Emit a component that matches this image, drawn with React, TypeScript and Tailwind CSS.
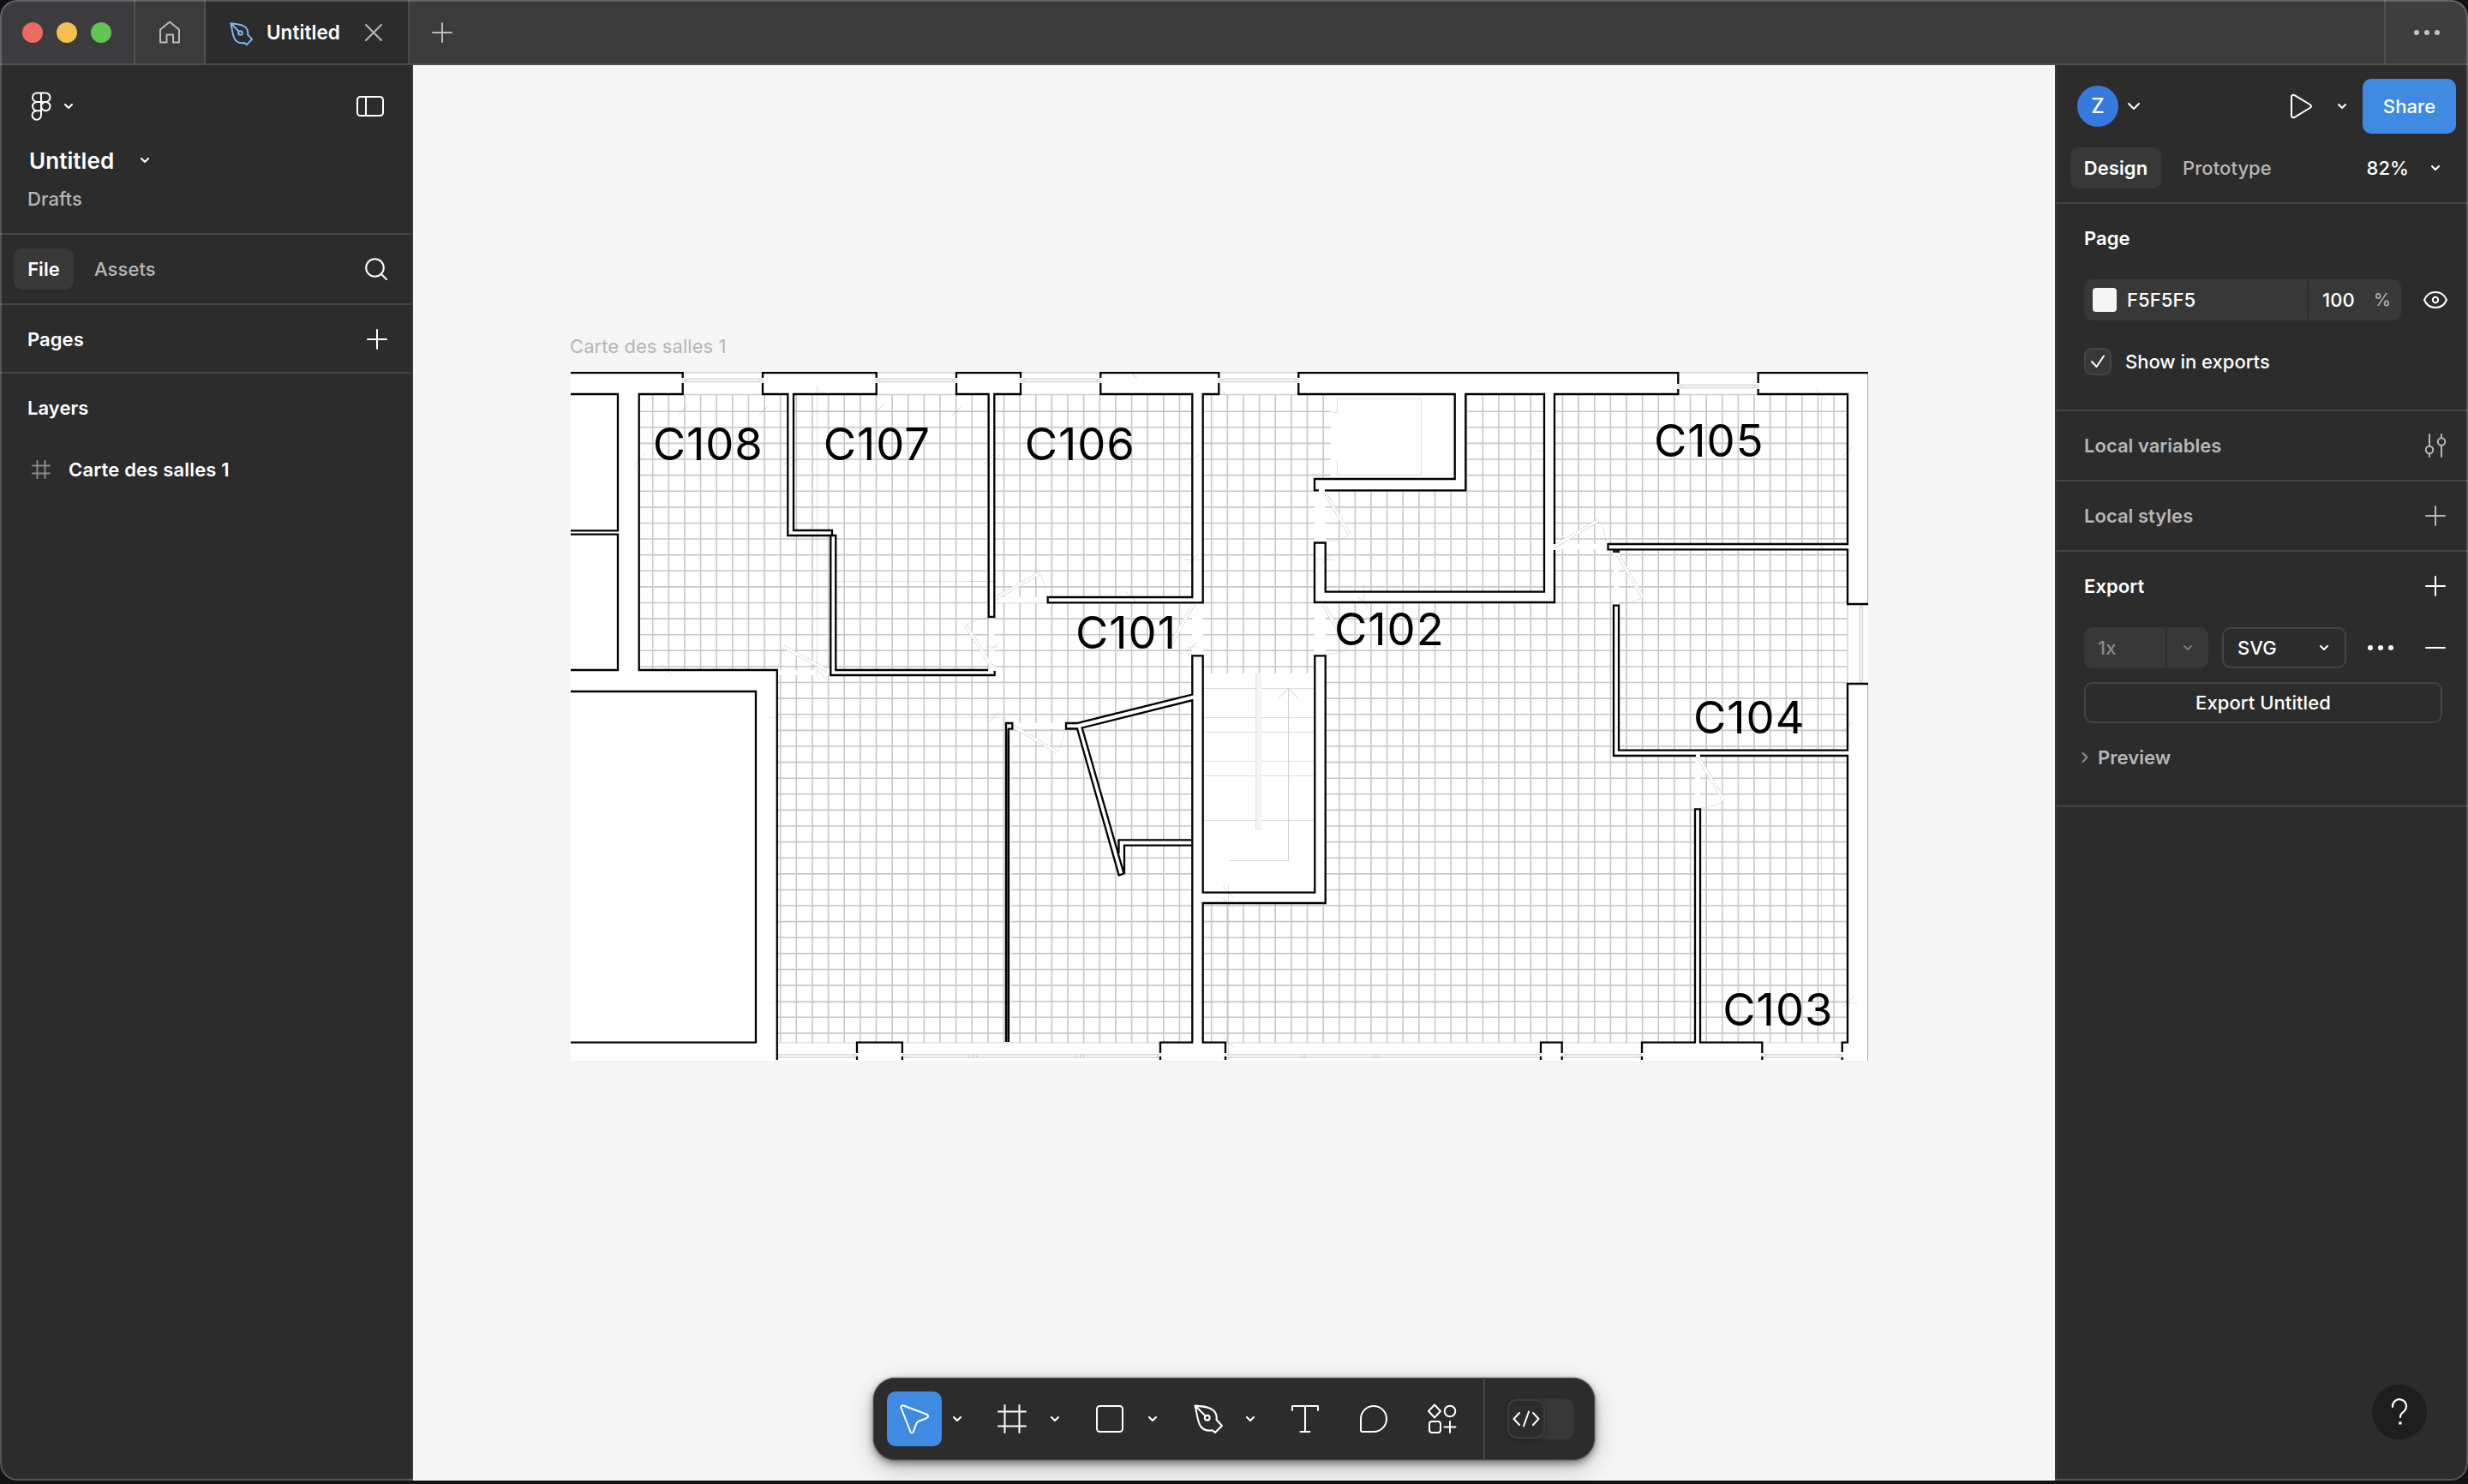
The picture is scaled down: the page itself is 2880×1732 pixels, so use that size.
import type { ReactNode } from 'react';

type IconProps = { d?: string; w?: number; h?: number; className?: string; sw?: number; children?: ReactNode };

function Icon({ d, w = 48, h = 48, className = '', sw = 2, children }: IconProps) {
  return (
    <svg
      width={w}
      height={h}
      viewBox={`0 0 ${w} ${h}`}
      fill="none"
      stroke="currentColor"
      strokeWidth={sw}
      strokeLinecap="round"
      strokeLinejoin="round"
      className={`shrink-0 ${className}`}
    >
      {d && <path d={d} />}
      {children}
    </svg>
  );
}

const Chevron = ({ className = '' }: { className?: string }) => (
  <Icon w={16} h={16} d="M4 6 L8 10 L12 6" sw={2.1} className={className} />
);

const Plus = ({ className = '' }: { className?: string }) => (
  <Icon w={24} h={24} d="M12 1V23M1 12H23" className={className} />
);

/* ---------- Floor plan ---------- */

const X0 = 745.7;
const X1 = 2156;
const Y0 = 460;
const Y1 = 1216.7;

const gridPath = (() => {
  let p = '';
  for (let i = 0; i < 75; i++) p += `M${(761.7 + i * 18.628).toFixed(2)} ${Y0}V${Y1}`;
  for (let i = 0; i < 40; i++) p += `M${X0} ${(480.2 + i * 18.608).toFixed(2)}H${X1}`;
  return p;
})();

/* White areas painted over the tile grid: x1, y1, x2, y2 */
const blanks: number[][] = [
  [666, 782, 907, 1238],
  [919, 460, 926, 625],
  [919, 619, 975, 625],
  [969, 619, 975, 788],
  [969, 782, 1160.5, 788],
  [907, 782, 969, 788],
  [1154, 460, 1160.5, 788],
  [1160, 697, 1404, 703.5],
  [1391, 460, 1404, 1217],
  [1552.7, 460, 1710, 560],
  [1534, 559, 1710, 572],
  [1698, 460, 1710, 572],
  [1802, 460, 1814, 703],
  [1534, 572, 1546.7, 1054],
  [1534, 691, 1814, 703],
  [1404, 786, 1540, 1054],
  [1814, 635, 2156, 641],
  [1883, 641, 1889, 882],
  [1883, 876, 2156, 882],
  [1978, 882, 1984, 1217],
  [1173, 844, 1180, 1217],
  [1173, 844, 1257, 850.5],
];

const walls = [
  // outer facade
  'M666 435H796.7V441M796.7 447V460H745.7V782H906.8V1237',
  'M1022.7 435H890V441M890 447V460H919.3V625H975.3V782H1153',
  'M1116 435H1191V441M1191 447V460H1160.3V720H1153.7V460H1116V447M1116 441V434',
  'M1022.7 434V441M1022.7 447V460H926V619H971V625M969.3 625V788H1160.7V783',
  'M1284.3 434V441M1284.3 447V460H1391.3V697H1222.7V703.3H1403.7V460H1422.3V447M1422.3 441V435H1284.3',
  'M1515.3 441V435H1958.3V441M1958.3 454V460H1814V635M1814 642V703H1534V633.5H1546.7V690.7H1802V460H1710.3V572.3H1546',
  'M1515.3 447V460H1697.7V559H1534V572.3H1539',
  'M2051.7 447V435H2180M2051.7 454V460H2156V635H1876.5V641.3H2156V705H2180M1958.3 441V448',
  'M2180 798H2156V875.7H1889V706.7H1883V882H1979M1984 882H2156V1216.7H2149.7V1228M2149.7 1234V1237',
  // rooms on the west side
  'M666 460H721V619.3H666M666 623.7H721V782H666',
  'M666 807H882V1216.7H666',
  // south piers
  'M1000 1237V1233M1000 1229V1216.7H1052.9V1229M1052.9 1233V1237',
  'M1354 1237V1233M1354 1229V1216.7H1391.3V817.3L1262.7 849.5L1311.5 1019.5L1305.7 1021.5L1257 850.5H1244V844H1256.7L1391.3 810.7V765.3H1403.7V1041.7H1534.3V765.3H1546.7V1054H1403.7V1216.7H1430V1229M1430 1233V1237',
  'M1798 1237V1233M1798 1229V1216.7H1822.7V1229M1822.7 1233V1237',
  'M1916 1237V1233M1916 1229V1216.7H1978V944.3H1984V1216.7H2056.3V1229M2056.3 1233V1237',
  // closet
  'M1391 980.3H1305.5V996M1391 986.7H1312V1019.5',
  'M1174 1216V844H1181.3V850.7H1177V1216',
].join('');

const topWindows = [
  [796.7, 890, 444],
  [1022.7, 1116, 444],
  [1191, 1284.3, 444],
  [1422.3, 1515.3, 444],
  [1958.3, 2051.7, 451],
];
const bottomWindows = [
  [907, 1000],
  [1053, 1354],
  [1430, 1798],
  [1823, 1916],
  [2056.3, 2149.7],
];

/* Door leaf: hinge, leaf tip, jamb where the swing arc ends */
const doors: number[][] = [
  [968, 784, 915, 755, 908, 781],
  [1158, 779, 1127, 730, 1153, 721],
  [1162, 698, 1213, 669, 1221, 697],
  [1393, 705, 1364, 756, 1392, 764],
  [1545, 573, 1575, 624, 1546, 632],
  [1544, 705, 1574, 756, 1546, 764],
  [1815, 637, 1866, 607, 1874, 636],
  [1887, 646, 1917, 697, 1889, 705],
  [1982, 884, 2012, 935, 1984, 943],
  [1183, 848, 1234, 878, 1242, 850],
];

const ticks: number[][] = [
  [891, 479], [797, 479], [1026, 477], [1116, 480], [746, 537], [920, 537], [928, 538], [1154, 536], [1161, 537],
  [1393, 536], [1392, 653], [1391, 755], [1160, 755], [1547, 654], [2156, 527], [2156, 848], [1886, 849], [1160, 837],
  [2157, 1169], [1983, 1169],
];
const backTicks: number[][] = [
  [778, 782], [960, 788], [1321, 436], [1429, 459], [1319, 696], [2125, 460], [2125, 637], [1433, 1041], [1433, 1054], [1433, 1216], [1591, 703],
];

const rooms: [string, number, number][] = [
  ['C108', 761.7, 536.7],
  ['C107', 960.7, 536.7],
  ['C106', 1195.7, 536.5],
  ['C105', 1930, 533.3],
  ['C101', 1255, 756.7],
  ['C102', 1557, 752.8],
  ['C104', 1976, 856.4],
  ['C103', 2010.3, 1196.8],
];

function FloorPlan() {
  return (
    <svg width="1514" height="804" viewBox="666 434 1514 804" fill="none" className="block">
      <rect x="666" y="435" width="1514" height="803" fill="#fff" />
      <path d={gridPath} stroke="#c8c8c8" strokeWidth="1.6" />
      {blanks.map(([a, b, c, d], i) => (
        <rect key={i} x={a} y={b} width={c - a} height={d - b} fill="#fff" />
      ))}
      <path d="M1256.7 844L1391.3 810.7V817.3L1262.7 849.5L1311.5 1019.5L1305.7 1021.5L1257 850.5ZM1305.5 980.3H1391V986.7H1312V1019L1305.5 996Z" fill="#fff" />

      {/* dimension lines */}
      <path
        d="M926 480H1153M1161 480H1391M898 837.3H1168M898 1170.5H1180M1391 1170.5H1740M1978 1170.5H2168M1382 653.5H1402M1536 653.5H1556M1384 755H1399M1150 755H1165M1130 678.5H1164M1792 526.5H1800"
        stroke="#a08a8a"
        strokeOpacity="0.22"
      />
      <path d="M953.5 450V790M976 678.5H1160M2125.5 460V1200M1433.5 1033V1237M1591.5 682V702" stroke="#888" strokeOpacity="0.25" />
      {ticks.map(([x, y], i) => (
        <path key={i} d={`M${x - 6} ${y + 6}L${x + 6} ${y - 6}`} stroke="#a08a8a" strokeOpacity="0.35" />
      ))}
      {backTicks.map(([x, y], i) => (
        <path key={i} d={`M${x - 6} ${y - 6}L${x + 6} ${y + 6}`} stroke="#a08a8a" strokeOpacity="0.35" />
      ))}

      {/* doors */}
      {doors.map(([hx, hy, tx, ty, ax, ay], i) => {
        const sweep = (tx - hx) * (ay - hy) - (ty - hy) * (ax - hx) > 0 ? 1 : 0;
        return (
          <g key={i}>
            <path d={`M${tx} ${ty}A60 60 0 0 ${sweep} ${ax} ${ay}`} stroke="#bbb" strokeWidth="0.8" strokeDasharray="1.5 1.5" />
            <path d={`M${hx} ${hy}L${tx} ${ty}`} stroke="#fff" strokeWidth="4.2" />
            <path d={`M${hx} ${hy}L${tx} ${ty}`} stroke="#b5b5b5" strokeWidth="4.4" strokeDasharray="1 1.6" />
            <path d={`M${hx} ${hy}L${tx} ${ty}`} stroke="#fff" strokeWidth="2.4" />
          </g>
        );
      })}

      {/* elevator */}
      <path d="M1555 481.5H1560.4V465.4H1658.6V554.5H1560.4V538" stroke="#ddd" />

      {/* stairs */}
      <path d="M1405 803.5H1533M1405 837.5H1533M1405 854.5H1533M1405 888.5H1533M1405 905.5H1533M1405 957.5H1533" stroke="#dedede" />
      <rect x="1465.7" y="786" width="6.5" height="181.5" fill="#f4f4f4" />
      <path d="M1465.7 786V967.5H1472" stroke="#dcdcdc" />
      <path d="M1435 1004.5H1503.5V803.5M1491 815.5L1503.5 803.5L1515.7 815.5" stroke="#cfcfcf" />

      {/* windows */}
      {topWindows.map(([a, b, y], i) => (
        <g key={i} stroke="#cfcfcf">
          <path d={`M${a} 435H${b}M${a} 460.5H${b}`} strokeWidth="1.6" />
          <rect x={a} y={y - 1.8} width={b - a} height="3.6" fill="#f6f6f6" />
          <path d={`M${a + 4} ${y - 2}V${y + 2}M${b - 4} ${y - 2}V${y + 2}`} />
        </g>
      ))}
      {bottomWindows.map(([a, b], i) => (
        <g key={i} stroke="#cfcfcf">
          <path d={`M${a} 1217H${b}`} />
          <rect x={a} y="1230.7" width={b - a} height="3.6" fill="#f6f6f6" />
          <path d={`M${a + 4} 1231V1234M${b - 4} 1231V1234`} />
        </g>
      ))}
      <path d="M1131 1231V1234M1135.5 1231V1234M1140 1231V1234M1256 1231V1234M1260.5 1231V1234M1265 1231V1234M1519 1231V1234M1523 1231V1234M1604 1231V1234M1608 1231V1234" stroke="#c4c4c4" />
      <path d="M2156 705V798" stroke="#cfcfcf" strokeWidth="1.4" />
      <rect x="2170.2" y="705" width="3.4" height="93" fill="#f6f6f6" stroke="#cfcfcf" />
      <path d="M2170 709H2174M2170 794H2174" stroke="#cfcfcf" />
      <path d="M2179.6 436V704M2179.6 799V1238" stroke="#a0a0a0" />

      <path d="M1174 851H1177V1216H1174Z" fill="#777" />
      <path d="M1882 641.5H1890V645H1882Z" fill="#222" />
      <path d={walls} stroke="#000" strokeWidth="2.3" strokeLinejoin="miter" />

      {rooms.map(([name, x, y]) => (
        <text key={name} x={x} y={y} fill="#000" className="font-['Inter',sans-serif] text-[52.5px] font-normal tracking-[0.95px]">
          {name}
        </text>
      ))}
    </svg>
  );
}

/* ---------- Chrome ---------- */

const penPath =
  'M1.5 1.5C9 2.5 17 2 22 7C25 10 25.5 13.5 25 17L31 23.500L23.500 31L20.500 28.500C15 29.500 10.500 28 7.500 24C4 19 3.500 9 1.500 1.500ZM1.500 1.500L13 13';

function PenIcon({ size = 32, sw = 2 }: { size?: number; sw?: number }) {
  return (
    <svg width={size} height={size} viewBox="0 0 32 32" fill="none" stroke="currentColor" strokeWidth={sw} strokeLinejoin="round" className="shrink-0 overflow-visible">
      <path d={penPath} />
      <circle cx="14.800" cy="14.800" r="2.700" />
    </svg>
  );
}

function TitleBar() {
  return (
    <header className="flex h-[76px] bg-[#3b3b3b]">
      <div className="flex w-[158px] items-center gap-4 border-r-2 border-b-2 border-[#505052] bg-[#3c3c3f] pt-[2px] pl-[26px]">
        <span className="size-6 rounded-full bg-[#ec6a5e]" />
        <span className="size-6 rounded-full bg-[#f4bf4f]" />
        <span className="size-6 rounded-full bg-[#61c554]" />
      </div>
      <div className="flex w-[82px] items-center justify-center border-r-2 border-b-2 border-[#505050] pt-px text-[#b9b9b9]">
        <Icon w={26} h={28} d="M2 10.500L13 1.500L24 10.500V25.500H17V16.500H9.500V25.500H2Z" />
      </div>
      <div className="flex w-[238px] items-center border-r-2 border-b-2 border-[#484848] bg-[#2c2c2c] pt-[2px] pl-7">
        <span className="pt-[2px] text-[#7cb9f6]">
          <PenIcon size={27} sw={2.3} />
        </span>
        <span className="ml-4 w-[113px] text-[22.500px] font-semibold text-white">Untitled</span>
        <Icon w={24} h={24} d="M3 3L21 21M21 3L3 21" className="text-[#b9b9b9]" />
      </div>
      <div className="flex flex-1 items-center border-b-2 border-[#4e4e4e] pt-[2px] pl-[26px]">
        <Plus className="text-[#b9b9b9]" />
      </div>
      <div className="flex w-[98px] items-center justify-center border-b-2 border-l-2 border-[#505151] bg-[#3d3e3d] pt-[2px] text-[#c4c4c4]">
        <Dots />
      </div>
    </header>
  );
}

function Dots() {
  return (
    <span className="flex gap-[6px]">
      <span className="size-[6px] rounded-full bg-current" />
      <span className="size-[6px] rounded-full bg-current" />
      <span className="size-[6px] rounded-full bg-current" />
    </span>
  );
}

function LeftPanel() {
  return (
    <aside className="flex w-[482px] flex-col border-r-2 border-[#383838] bg-[#2c2c2c]">
      <div className="flex h-[198px] flex-col border-b-2 border-[#444]">
        <div className="mt-6 flex h-12 items-center pr-[31px] pl-9">
          <svg width="24" height="34" viewBox="0 0 24 34" fill="none" stroke="currentColor" strokeWidth="2">
            <path d="M12 1.500H7.200a5.200 5.200 0 0 0 0 10.400H12ZM12 1.500H17.300a5.200 5.200 0 0 1 0 10.400H12ZM12 11.900H7.200a5.200 5.200 0 0 0 0 10.400H12ZM12 22.300H7.200a5.200 5.200 0 1 0 4.800 5.200Z" />
            <circle cx="17.300" cy="17.100" r="5.200" />
          </svg>
          <Chevron className="ml-3" />
          <Icon w={34} h={26} className="ml-auto">
            <rect x="2" y="2" width="30" height="22" rx="3.500" />
            <path d="M12 2V24" />
          </Icon>
        </div>
        <div className="mt-[15px] flex h-12 items-center pl-[34px]">
          <span className="w-[127px] text-[26px] font-semibold">Untitled</span>
          <Chevron />
        </div>
        <div className="mt-px flex h-10 items-center pl-8 text-[#b7b7b7]">Drafts</div>
      </div>
      <div className="flex h-[82px] items-center border-b-2 border-[#444] pr-7 pl-4">
        <span className="flex h-12 w-[70px] items-center justify-center rounded-[10px] bg-[#383838] font-semibold">File</span>
        <span className="ml-6 text-[#b7b7b7]">Assets</span>
        <Icon w={26} h={26} className="ml-auto">
          <circle cx="11.500" cy="11.500" r="10.300" />
          <path d="M19 19L25 25" />
        </Icon>
      </div>
      <div className="flex h-20 items-center justify-between border-b-2 border-[#444] pt-[2px] pr-7 pl-8 font-semibold">
        Pages
        <Plus />
      </div>
      <div className="flex h-20 items-center pl-8 font-semibold">Layers</div>
      <div className="flex h-16 items-center pl-[37px]">
        <Icon w={22} h={22} d="M6.500 1V21M15.500 1V21M1 6.500H21M1 15.500H21" className="text-[#8a8a8a]" />
        <span className="ml-[21px] font-semibold tracking-[0.008em]">Carte des salles 1</span>
      </div>
    </aside>
  );
}

function RightPanel() {
  return (
    <aside className="flex w-[482px] flex-col border-l-2 border-[#383838] bg-[#2c2c2c]">
      <div className="flex h-24 items-center pr-[14px] pl-6">
        <span className="flex size-12 items-center justify-center rounded-full bg-[#3679df] text-[24px]">Z</span>
        <Icon w={16} h={16} d="M2 5L8 11L14 5" sw={2} className="ml-[10px]" />
        <Icon w={28} h={32} className="ml-auto" d="M3 5.500C3 3 5 2 7 3.300L24.500 14C26.500 15.300 26.500 16.800 24.500 18L7 28.700C5 30 3 29 3 26.500Z" />
        <Chevron className="ml-[26px]" />
        <span className="ml-4 flex h-16 w-[109px] items-center justify-center rounded-[10px] bg-[#3f8ae2] font-medium">Share</span>
      </div>
      <div className="flex h-[66px] border-b-2 border-[#444] pr-[30px] pl-4">
        <span className="flex h-12 w-[106px] items-center justify-center rounded-[10px] bg-[#383838] font-semibold">Design</span>
        <span className="ml-[25px] flex h-12 items-center text-[#b7b7b7]">Prototype</span>
        <span className="mr-[23px] ml-auto flex h-12 items-center">82%</span>
        <span className="flex h-12 items-center">
          <Chevron />
        </span>
      </div>
      <div className="flex h-[242px] flex-col border-b-2 border-[#444] pl-8">
        <div className="flex h-20 items-center font-semibold">Page</div>
        <div className="mt-2 flex h-12 items-center">
          <div className="flex h-12 w-[370px] items-center rounded-[10px] bg-[#383838] pl-[10px]">
            <span className="size-7 rounded-[4px] bg-[#f5f5f5]" />
            <span className="ml-3 w-[210px]">F5F5F5</span>
            <span className="h-11 w-[2px] bg-[#2c2c2c]" />
            <span className="w-[76px] pl-4">100</span>
            <span className="text-[20px] text-[#b0b0b0]">%</span>
          </div>
          <Icon w={30} h={24} className="ml-[25px]">
            <path d="M2 12C4.500 6 9 3 15 3S25.500 6 28 12C25.500 18 21 21 15 21S4.500 18 2 12Z" />
            <circle cx="15" cy="12" r="3.200" />
          </Icon>
        </div>
        <div className="mt-8 flex h-8 items-center">
          <span className="flex size-8 items-center justify-center rounded-[9px] border-2 border-[#444] bg-[#383838]">
            <Icon w={20} h={20} d="M3 10L8.500 16L17 3.500" />
          </span>
          <span className="ml-4 tracking-normal">Show in exports</span>
        </div>
      </div>
      <div className="flex h-[82px] items-center justify-between border-b-2 border-[#444] pr-6 pl-8 font-semibold tracking-[0.001em] text-[#b7b7b7]">
        Local variables
        <Icon w={28} h={28}>
          <path d="M7 1V14M7 24V27M21 1V5M21 14V27" />
          <circle cx="7" cy="19" r="4.200" />
          <circle cx="21" cy="9.500" r="4.200" />
        </Icon>
      </div>
      <div className="flex h-[82px] items-center justify-between border-b-2 border-[#444] pr-[26px] pl-8 font-semibold tracking-[0.001em] text-[#b7b7b7]">
        Local styles
        <Plus />
      </div>
      <div className="flex h-[298px] flex-col border-b-2 border-[#444] pl-8">
        <div className="flex h-20 items-center justify-between pr-[26px] font-semibold">
          Export
          <Plus />
        </div>
        <div className="mt-2 flex h-12 items-center">
          <span className="flex h-12 w-[95px] items-center rounded-l-[10px] bg-[#383838] pl-4 text-[#8a8a8a]">1x</span>
          <span className="ml-[2px] flex h-12 w-12 items-center justify-center rounded-r-[10px] bg-[#383838] text-[#7a7a7a]">
            <Chevron />
          </span>
          <span className="ml-4 flex h-12 w-[145px] items-center justify-between rounded-[10px] border-2 border-[#444] pr-4 pl-4">
            SVG
            <Chevron />
          </span>
          <span className="ml-[25px]">
            <Dots />
          </span>
          <Icon w={24} h={24} d="M1 12H23" className="ml-[37px]" />
        </div>
        <div className="mt-4 flex h-12 w-[418px] items-center justify-center rounded-[10px] border-2 border-[#444]">Export Untitled</div>
        <div className="mt-4 -ml-[6px] flex h-12 items-center text-[#b7b7b7]">
          <Icon w={14} h={16} d="M4.500 3L9.500 8L4.500 13" className="text-[#8f8f8f]" />
          <span className="ml-2 font-semibold">Preview</span>
        </div>
      </div>
    </aside>
  );
}

function Toolbar() {
  return (
    <div className="absolute bottom-6 left-[537px] flex h-24 w-[842px] items-center rounded-[26px] bg-[#2c2c2c] pl-4 text-white shadow-[0_0_2px_rgba(0,0,0,0.6),0_4px_10px_rgba(0,0,0,0.45),0_10px_30px_rgba(0,0,0,0.2)] ring-1 ring-inset ring-[#474747]">
      <span className="flex size-16 items-center justify-center rounded-[10px] bg-[#3f8ae2]">
        <Icon w={36} h={36} d="M2.500 5C2 3 3.500 1.800 5.500 2.500L32 12.500C35 13.800 34.800 16 32 17.200L23 20.800C21.500 21.500 20.800 22.200 20.300 23.500L17.300 32C16.300 35 13.800 35 13 32Z" />
      </span>
      <Chevron className="ml-[10px]" />
      <Icon w={34} h={34} d="M8.500 1V33M25.500 1V33M1 8.500H33M1 25.500H33" className="ml-[39px]" />
      <Chevron className="ml-[25px]" />
      <Icon w={34} h={34} className="ml-[39px]">
        <rect x="2" y="2" width="30" height="30" rx="3.500" />
      </Icon>
      <Chevron className="ml-[25px]" />
      <span className="ml-10">
        <PenIcon size={34} />
      </span>
      <Chevron className="ml-6" />
      <Icon w={34} h={34} d="M2 7V2H32V7M17 2V32M11.500 32H22.500" className="ml-[39px]" />
      <Icon w={34} h={34} d="M2 17A15 15 0 1 1 17 32H4Q2 32 2 30Z" className="ml-[46px]" />
      <Icon w={36} h={36} className="ml-[45px]">
        <path d="M9 1.500L16 9L9 16.500L2 9ZM27 21V34M20.500 27.500H33.500" />
        <circle cx="27" cy="9" r="6.300" />
        <rect x="3" y="21" width="13" height="13" rx="3" />
      </Icon>
      <span className="ml-[30px] h-24 w-[2px] bg-[#444]" />
      <span className="ml-[26px] flex h-12 w-[78px] items-center rounded-[12px] bg-[#383838]">
        <span className="flex h-[46px] w-11 items-center justify-center rounded-[11px] border-2 border-[#3c3c3c] bg-[#2c2c2c] shadow-[0_2px_6px_rgba(0,0,0,0.3)]">
          <Icon w={34} h={24} d="M9 5L2.500 12L9 19M20 3.500L14 20.500M25 5L31.500 12L25 19" />
        </span>
      </span>
    </div>
  );
}

export default function App() {
  return (
    <div className="h-[1732px] w-[2880px] overflow-hidden bg-[#121214] font-['Inter',sans-serif] text-[22px] font-medium tracking-[0.003em] text-white">
      <div className="relative flex h-[1728px] flex-col overflow-hidden rounded-[20px]">
        <TitleBar />
        <div className="flex flex-1">
          <LeftPanel />
          <main className="relative flex-1 bg-[#f5f5f5]">
            <div className="absolute top-[312px] left-[183px] font-normal tracking-[0.003em] text-[#b5b5b5]">Carte des salles 1</div>
            <div className="absolute top-[358px] left-[184px]">
              <FloorPlan />
            </div>
            <Toolbar />
          </main>
          <RightPanel />
        </div>
        <div className="absolute right-12 bottom-12 flex size-16 items-center justify-center rounded-full bg-[#1e1e1e]">
          <Icon w={20} h={32} d="M2 10A8 8 0 1 1 15.500 15C12 18 11 19 11 22" sw={2.200}>
            <rect x="10.400" y="28.400" width="1" height="1" strokeLinejoin="miter" />
          </Icon>
        </div>
        <div className="pointer-events-none absolute inset-0 rounded-[20px] border-2 border-white/20" />
      </div>
    </div>
  );
}
